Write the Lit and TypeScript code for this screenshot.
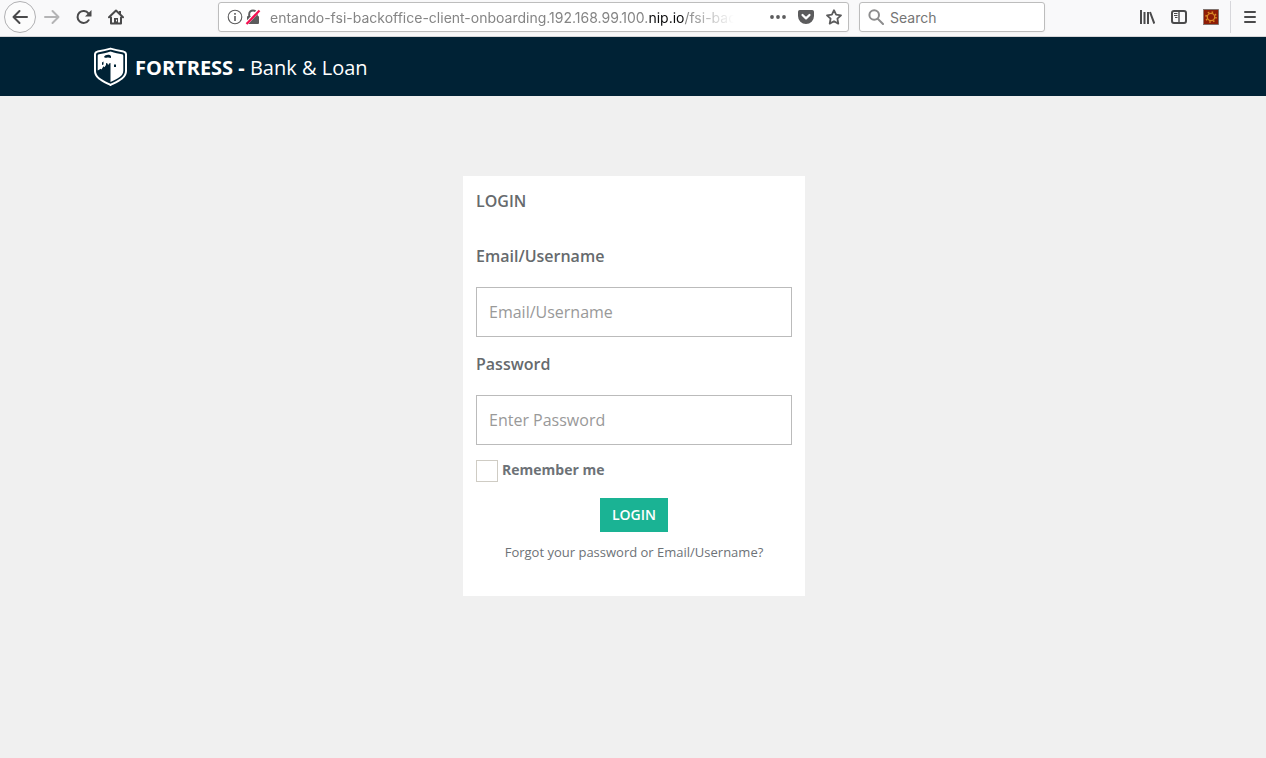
import { LitElement, html, css, svg } from "lit";
import { customElement } from "lit/decorators.js";

@customElement("browser-toolbar")
export class BrowserToolbar extends LitElement {
  static styles = css`
    :host {
      display: block;
      font-family: Inter, "Liberation Sans", sans-serif;
    }
    .bar {
      display: flex;
      align-items: center;
      box-sizing: border-box;
      height: 37px;
      padding: 0 0 3px 4px;
      background: #f9f9fa;
      border-bottom: 1px solid #d6d6d8;
    }
    button {
      display: flex;
      align-items: center;
      justify-content: center;
      flex: none;
      padding: 0;
      border: 0;
      background: none;
    }
    svg {
      display: block;
      flex: none;
    }
    .tool {
      width: 32px;
      height: 32px;
      box-sizing: border-box;
    }
    .back {
      border: 1px solid #b1b1b3;
      border-radius: 50%;
      background: #fcfcfc;
    }
    .space {
      flex: 0 1 86px;
    }
    .field {
      display: flex;
      align-items: center;
      box-sizing: border-box;
      height: 30px;
      border: 1px solid #bdbdbd;
      border-radius: 3px;
      background: #fff;
      box-shadow: 0 1px 3px rgba(0, 0, 0, 0.04);
    }
    .address {
      flex: 1;
      min-width: 0;
      padding: 0 6px 0 8px;
    }
    .url {
      flex: 1;
      min-width: 0;
      margin: 0 36px 0 7px;
      padding-top: 2px;
      overflow: hidden;
      white-space: nowrap;
      font-size: 14px;
      line-height: 20px;
      color: #858585;
      -webkit-mask-image: linear-gradient(to left, transparent, #000 48px);
      mask-image: linear-gradient(to left, transparent, #000 48px);
    }
    .host {
      color: #0c0c0d;
    }
    .action {
      width: 16px;
      height: 20px;
      margin-right: 12px;
    }
    .action:last-child {
      margin-right: 0;
    }
    .search {
      flex: 0 1 186px;
      min-width: 0;
      margin-left: 10px;
      padding: 0 8px;
      gap: 6px;
    }
    .search input {
      flex: 1;
      min-width: 0;
      padding: 2px 0 0;
      border: 0;
      outline: 0;
      background: none;
      font: 14px/20px Inter, "Liberation Sans", sans-serif;
      color: #0c0c0d;
    }
    .search input::placeholder {
      color: #757575;
      opacity: 1;
    }
    .rule {
      width: 1px;
      height: 32px;
      margin: 0 3px;
      background: #d7d7db;
    }
  `;

  private icon(body: unknown, size = 16) {
    return html`<svg width=${size} height=${size} viewBox="0 0 16 16" fill="none" stroke="#4a4a4b"
      stroke-width="2" stroke-linecap="round" stroke-linejoin="round" aria-hidden="true">${body}</svg>`;
  }

  render() {
    return html`
      <div class="bar">
        <button class="tool back" aria-label="Back">
          ${this.icon(svg`<path d="M15 8H1.5M7.5 2 1.5 8l6 6"/>`)}
        </button>
        <button class="tool" aria-label="Forward">
          ${this.icon(svg`<path stroke="#b4b4b5" d="M1 8h13.5M8.5 2l6 6-6 6"/>`)}
        </button>
        <button class="tool" aria-label="Reload">
          ${this.icon(svg`<path d="M12.6 11.2A6 6 0 1 1 12.4 4.4"/><path fill="#4a4a4b" stroke="none" d="M15.5 1v6a.6.6 0 0 1-.6.6H9z"/>`)}
        </button>
        <button class="tool" aria-label="Home">
          ${this.icon(svg`<path d="M1 8.3 8 1.5l7 6.8M3 8.5V14.5h10V8.5"/><path fill="#4a4a4b" stroke="none" d="M11 2h2v4l-2-2zM6 9h4v6H6z"/><path stroke="#f9f9fa" stroke-width="1" d="M8.5 11v1"/>`)}
        </button>
        <div class="space"></div>
        <div class="field address">
          ${this.icon(svg`<circle cx="8" cy="8" r="6.8" stroke="#5c5c5d" stroke-width="1.1"/><path stroke="#5c5c5d" stroke-width="1.6" stroke-linecap="butt" d="M8 7v5M8 4v1.7"/>`)}
          <svg width="20" height="16" viewBox="0 0 20 16" fill="none" aria-hidden="true">
            <path d="M6.2 8V5.2a3.8 3.8 0 0 1 7.6 0V8" stroke="#5c5c5d" stroke-width="2" />
            <rect x="4" y="7" width="12" height="8" rx="1" fill="#5c5c5d" />
            <path d="M3 15 16 1" stroke="#fff" stroke-width="3.4" />
            <path d="M3.5 15 16.5 1.5" stroke="#f50f50" stroke-width="2.2" />
          </svg>
          <div class="url" role="textbox" aria-label="Address">entando-fsi-backoffice-client-onboarding.192.168.99.100.<span class="host">nip.io</span>/fsi-back</div>
          <button class="action" aria-label="Page actions">
            ${this.icon(svg`<g fill="#5c5c5d" stroke="none"><circle cx="2" cy="8" r="1.9"/><circle cx="8" cy="8" r="1.9"/><circle cx="14" cy="8" r="1.9"/></g>`)}
          </button>
          <button class="action" aria-label="Save to Pocket">
            ${this.icon(svg`<path fill="#5c5c5d" stroke="none" d="M1.8 1h12.4A1.8 1.8 0 0 1 16 2.8V7A8 8 0 0 1 0 7V2.8A1.8 1.8 0 0 1 1.8 1z"/><path stroke="#fff" stroke-width="2.2" d="m4.5 6 3.5 3.4L11.5 6"/>`)}
          </button>
          <button class="action" aria-label="Bookmark">
            ${this.icon(svg`<path stroke="#5c5c5d" stroke-width="1.8" d="m8 1.2 2.1 4.5 4.9.6-3.6 3.4.9 4.9L8 12.2l-4.3 2.4.9-4.9L1 6.3l4.9-.6z"/>`)}
          </button>
        </div>
        <label class="field search">
          ${this.icon(svg`<g stroke="#8c8c8d"><circle cx="6.2" cy="6" r="4.8"/><path d="m10 10 5 5"/></g>`)}
          <input type="search" placeholder="Search" aria-label="Search" />
        </label>
        <div class="space"></div>
        <button class="tool" aria-label="Library">
          ${this.icon(svg`<path stroke-linecap="butt" d="M2 1v14M5.5 3v12M9 3v12M11 3l4.3 11.6"/>`)}
        </button>
        <button class="tool" aria-label="Sidebars">
          ${this.icon(svg`<rect x="1" y="2" width="14" height="12" rx="2"/><path stroke-width="1.4" stroke-linecap="butt" d="M8 2v12"/><path stroke-width="1" stroke-linecap="butt" d="M3 4.5h3.5M3 6.5h3.5M4 8.5h2.5"/>`)}
        </button>
        <button class="tool" aria-label="Extension">
          ${this.icon(svg`<rect x=".5" y=".5" width="15" height="15" fill="#8e1c06" stroke="#80736f" stroke-width="1"/><circle cx="8" cy="8" r="5" stroke="#d98725" stroke-width="1.6" stroke-dasharray="1.6 2.33" stroke-linecap="butt"/><circle cx="8" cy="8" r="3.7" stroke="#d98725" stroke-width="1.3"/>`)}
        </button>
        <div class="rule"></div>
        <button class="tool" aria-label="Menu">
          ${this.icon(svg`<path d="M3 3h10M3 8h10M3 13h10"/>`)}
        </button>
      </div>
    `;
  }
}

@customElement("login-card")
export class LoginCard extends LitElement {
  static styles = css`
    :host {
      display: block;
    }
    .card {
      box-sizing: border-box;
      width: 342px;
      max-width: 100%;
      padding: 13px 13px 34px;
      background: #fff;
      color: #666a6d;
    }
    .title,
    .label {
      display: block;
      margin: 0;
      font-size: 16px;
      line-height: 24px;
      font-weight: 600;
    }
    .title {
      margin-bottom: 31px;
    }
    .text {
      display: block;
      box-sizing: border-box;
      width: 100%;
      height: 50px;
      margin: 19px 0 15px;
      padding: 0 12px;
      border: 1px solid #bbb;
      border-radius: 0;
      background: #fff;
      font: 16px/24px "Open Sans", sans-serif;
      color: #666a6d;
    }
    .text::placeholder {
      color: #999;
      opacity: 1;
    }
    .remember {
      display: flex;
      gap: 4px;
      font-size: 14px;
      line-height: 20px;
      font-weight: 700;
      color: #6d7277;
    }
    .tick {
      appearance: none;
      box-sizing: border-box;
      width: 22px;
      height: 22px;
      margin: 0;
      border: 1px solid #cfccc4;
      background: #fff;
    }
    .tick:checked {
      background: #1ab394;
    }
    .submit {
      display: block;
      height: 34px;
      margin: 16px auto 10px;
      padding: 0 12px;
      border: 0;
      background: #1ab394;
      font: 600 14px/20px "Open Sans", sans-serif;
      color: #fff;
    }
    .forgot {
      display: block;
      font-size: 13px;
      line-height: 20px;
      text-align: center;
      text-decoration: none;
      color: #6d7277;
    }
  `;

  render() {
    return html`
      <form class="card" @submit=${(e: Event) => e.preventDefault()}>
        <h1 class="title">LOGIN</h1>
        <label class="label" for="user">Email/Username</label>
        <input class="text" id="user" type="text" placeholder="Email/Username" />
        <label class="label" for="pass">Password</label>
        <input class="text" id="pass" type="password" placeholder="Enter Password" />
        <label class="remember"><input class="tick" type="checkbox" />Remember me</label>
        <button class="submit" type="submit">LOGIN</button>
        <a class="forgot" href="#">Forgot your password or Email/Username?</a>
      </form>
    `;
  }
}

@customElement("app-root")
export class AppRoot extends LitElement {
  static styles = css`
    :host {
      display: flex;
      flex-direction: column;
      min-height: 100vh;
      background: #f0f0f0;
      font-family: "Open Sans", sans-serif;
    }
    .header {
      background: #002235;
    }
    .inner {
      display: flex;
      align-items: center;
      gap: 7px;
      box-sizing: border-box;
      max-width: 1170px;
      height: 59px;
      margin: 0 auto;
      padding: 0 45px;
      color: #fff;
      font-size: 20px;
      line-height: 30px;
    }
    .brand {
      padding-top: 2px;
    }
    .main {
      display: flex;
      justify-content: center;
      padding: 80px 0 80px 2px;
    }
  `;

  render() {
    return html`
      <browser-toolbar></browser-toolbar>
      <header class="header">
        <div class="inner">
          <svg width="35" height="40" viewBox="0 0 35 40" fill="none" aria-hidden="true">
            <path d="M17.5 1.6C13 3 8 4 4.5 4.6 2.8 5 2 5.8 2 7.5V24c0 7 7.5 10 15.5 14C25.5 34 33 31 33 24V7.5c0-1.700-.8-2.500-2.500-2.900C27 4 22 3 17.500 1.600z" stroke="#fff" stroke-width="2" />
            <path d="M17.500 4.500C13 6 9.500 6.700 6 7.200 5 7.400 4.700 8 4.700 9v14.500l3-1.700.8.7 2-3.200 1 1 1.500-2.300v-2l1.500.6.6 1.600 1-1.700 1.400-.5V35C25 31.500 30.300 29 30.300 23.500V9c0-1-.3-1.600-1.300-1.800-3.500-.5-7-1.200-11.500-2.700z" fill="#fff" />
            <path d="M11 10c1-2.200 5.300-3 7-1v2c-1.800-.6-3-.8-4.300-.3-1 .3-1.700.1-2.700-.7zM9 15.500l1.500-1v3L9 18zM21 17.500h2v2.500h-2z" fill="#002235" />
          </svg>
          <div class="brand"><strong>FORTRESS -</strong> Bank &amp; Loan</div>
        </div>
      </header>
      <main class="main"><login-card></login-card></main>
    `;
  }
}
